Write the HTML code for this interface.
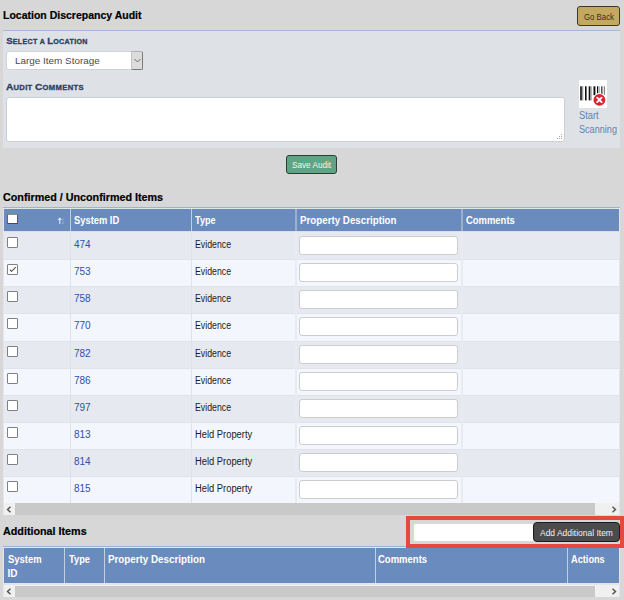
<!DOCTYPE html>
<html><head><meta charset="utf-8">
<style>
*{box-sizing:border-box;margin:0;padding:0}
html,body{width:624px;height:600px;overflow:hidden;background:#d7d7d7;font-family:"Liberation Sans",sans-serif;color:#111;position:relative}
div,span{position:absolute}
.t{line-height:1;white-space:nowrap}
.b{font-weight:bold;color:#000;-webkit-text-stroke:0.2px #000}
.lbl{font-weight:bold;color:#2b405e;font-variant:small-caps;font-size:10.5px;-webkit-text-stroke:0.3px #2b405e}
.lbl2{font-weight:bold;color:#2b405e;-webkit-text-stroke:0.3px #2b405e;transform-origin:0 0;font-size:10px}
.lbl2 span{position:static}
.lbl2 .c{font-size:9.6px}
.lbl2 .sc{font-size:7.1px;letter-spacing:0.35px}
.hdr{font-weight:bold;color:#fff;font-size:10px;transform-origin:0 0}
.row{left:4px;width:615px;height:27.05px}
.o{background:#e6e9f0}
.e{background:#f3f7fd}
.cb{left:3.3px;top:4.5px;width:11px;height:11.5px;border:1px solid #808080;background:#fff;border-radius:1px}
.lnk{left:70px;top:7.5px;font-size:10px;color:#2f50a8}
.typ{left:191px;top:7.6px;font-size:10px;color:#1a1a1a;transform-origin:0 0}
.ev{transform:scaleX(0.875)}
.hp{transform:scaleX(0.935)}
.inp{left:295px;top:4px;width:159px;height:19px;background:#fff;border:1px solid #cdcdcd;border-radius:3px}
.vl{top:0;width:1px;height:100%;background:#dfe3e9}
.v2{width:2px;background:#e8ebf0}
.hvl{width:1px;background:#c2cfe3}
.sbb{background:#f0f0f0;height:12px}
.thumb{background:#c9c9c9;height:12px}
</style></head><body>

<div class="t b" style="left:3px;top:10.1px;font-size:10.5px">Location Discrepancy Audit</div>
<div style="left:577px;top:6px;width:43px;height:20px;background:#c3a95d;border:1px solid #3b392c;border-radius:3px"></div>
<div class="t" style="left:584px;top:12.8px;font-size:9px;color:#352f1e;transform:scaleX(0.87);transform-origin:0 0">Go Back</div>

<!-- panel -->
<div style="left:3px;top:30px;width:617px;height:118px;background:#dee1e5;border-top:1px solid #a5b6da"></div>
<div class="t lbl2" style="left:6.3px;top:36.3px;transform:scaleX(1.0)"><span class="c">S</span><span class="sc">ELECT A </span><span class="c">L</span><span class="sc">OCATION</span></div>
<div style="left:6px;top:51px;width:137px;height:19px;background:#fff;border:1px solid #cfd3d7;border-radius:3px"></div>
<div class="t" style="left:15.3px;top:56.6px;font-size:9.25px;color:#4a4a4a;transform:scaleX(1.07);transform-origin:0 0">Large Item Storage</div>
<div style="left:131px;top:51px;width:12px;height:19px;background:#dcdcdc;border:1px solid #c4c4c4;border-top-color:#b0b0b0;border-right-color:#7a7a7a;border-bottom-color:#7a7a7a;border-radius:0 2px 2px 0"></div>
<svg style="position:absolute;left:134px;top:58px" width="7" height="5" viewBox="0 0 7 5"><path d="M0.5 1 L3.5 4 L6.5 1" fill="none" stroke="#6a6a6a" stroke-width="1"/></svg>
<div class="t lbl2" style="left:6.3px;top:82.3px;transform:scaleX(1.07)"><span class="c">A</span><span class="sc">UDIT </span><span class="c">C</span><span class="sc">OMMENTS</span></div>
<div style="left:6px;top:97px;width:559px;height:45px;background:#fff;border:1px solid #cbcfd3;border-radius:3px"></div>
<svg style="position:absolute;left:556.5px;top:133.5px" width="6" height="6" viewBox="0 0 6 6"><g fill="#a8a8a8"><rect x="4" y="0" width="1" height="1"/><rect x="2" y="2" width="1" height="1"/><rect x="4" y="2" width="1" height="1"/><rect x="0" y="4" width="1" height="1"/><rect x="2" y="4" width="1" height="1"/><rect x="4" y="4" width="1" height="1"/></g></svg>

<!-- barcode -->
<div style="left:579px;top:80px;width:28px;height:28px;background:#fff"></div>
<svg style="position:absolute;left:579px;top:80px" width="28" height="28" viewBox="0 0 28 28">
<g fill="#111">
<rect x="1.2" y="6.3" width="1.6" height="14.1"/>
<rect x="3.3" y="6.3" width="0.9" height="14.1" fill="#777"/>
<rect x="6" y="6.3" width="1.6" height="14.1"/>
<rect x="9.7" y="6.3" width="1.6" height="14.1"/>
<rect x="11.3" y="6.3" width="1.3" height="14.1" fill="#888"/>
<rect x="14.5" y="6.3" width="1.9" height="9"/>
<rect x="18" y="6.3" width="1.1" height="7"/>
<rect x="19.6" y="6.3" width="0.9" height="7" fill="#777"/>
<rect x="22.3" y="6.3" width="0.8" height="8"/>
<rect x="23.3" y="6.3" width="0.8" height="8" fill="#888"/>
<rect x="24.9" y="6.3" width="0.8" height="8.5" fill="#555"/>
</g>
<circle cx="20.4" cy="19.9" r="6.7" fill="#fff"/>
<circle cx="20.4" cy="19.9" r="5.9" fill="#dc2430"/>
<path d="M18.2 17.7 L22.6 22.1 M22.6 17.7 L18.2 22.1" stroke="#fff" stroke-width="1.9" stroke-linecap="round"/>
</svg>
<div class="t" style="left:578.6px;top:110.6px;font-size:10px;color:#6384b0;transform:scaleX(0.93);transform-origin:0 0">Start</div>
<div class="t" style="left:578.6px;top:124.6px;font-size:10px;color:#6384b0;transform:scaleX(0.91);transform-origin:0 0">Scanning</div>

<!-- save -->
<div style="left:286px;top:155px;width:51px;height:19px;background:#5fa585;border:1px solid #2b3e34;border-radius:3px"></div>
<div class="t" style="left:292.3px;top:160.8px;font-size:9.25px;color:#eef7f2;transform:scaleX(0.885);transform-origin:0 0">Save Audit</div>

<div class="t b" style="left:3px;top:191.9px;font-size:10.75px">Confirmed / Unconfirmed Items</div>

<!-- table 1 -->
<div style="left:3px;top:207px;width:617px;height:308px;background:#e2e5e9;border-top:1px solid #a0b0d8"></div>
<div style="left:4px;top:209px;width:615px;height:22px;background:#6a8bbd"></div>
<div class="hvl" style="left:70px;top:209px;height:22px"></div>
<div class="hvl" style="left:191px;top:209px;height:22px"></div>
<div class="hvl" style="left:295px;top:209px;height:22px;width:2px;background:#9cb0cf"></div>
<div class="hvl" style="left:461px;top:209px;height:22px;width:2px;background:#9cb0cf"></div>
<div style="left:7px;top:214px;width:11px;height:10px;background:#fff;border:1px solid #666;border-top-color:#8c8c8c;border-bottom-color:#4a4a4a;border-right-color:#555"></div>
<svg style="position:absolute;left:57px;top:217px" width="8" height="8" viewBox="0 0 8 8"><path d="M2.8 7 V1.2 M1.2 2.8 L2.8 1.2 L4.4 2.8" fill="none" stroke="#dfe8f6" stroke-width="1.1"/><path d="M6 1 V7 M4.9 5.9 L6 7 L7.1 5.9" fill="none" stroke="#8fa8cf" stroke-width="0.9"/></svg>
<div class="t hdr" style="left:74.4px;top:215.5px;transform:scaleX(0.935)">System ID</div>
<div class="t hdr" style="left:195.4px;top:215.5px;transform:scaleX(0.91)">Type</div>
<div class="t hdr" style="left:299.6px;top:215.5px;transform:scaleX(0.976)">Property Description</div>
<div class="t hdr" style="left:466px;top:215.5px;transform:scaleX(0.944)">Comments</div>
<div style="left:4px;top:231px;width:615px;height:1px;background:#dde1e6"></div>

<div style="left:0;top:232px;width:624px;height:271px">
<div class="row o" style="top:0px;height:27px"><div class="cb"></div><div class="vl" style="left:66px"></div><div class="vl" style="left:187px"></div><div class="vl v2" style="left:291px"></div><div class="vl v2" style="left:457px"></div><div class="t lnk">474</div><div class="t typ ev">Evidence</div><div class="inp"></div></div>
<div class="row e" style="top:27px;height:27px;box-shadow:inset 0 1px 0 #e0e3e9"><div class="cb"></div><svg style="position:absolute;left:5px;top:6px" width="8" height="7" viewBox="0 0 8 7"><path d="M0.9 4.7 L2.5 6.4 L6.75 2.2" fill="none" stroke="#555" stroke-width="1.1"/></svg><div class="vl" style="left:66px"></div><div class="vl" style="left:187px"></div><div class="vl v2" style="left:291px"></div><div class="vl v2" style="left:457px"></div><div class="t lnk">753</div><div class="t typ ev">Evidence</div><div class="inp"></div></div>
<div class="row o" style="top:54px;height:27px;box-shadow:inset 0 1px 0 #e0e3e9"><div class="cb"></div><div class="vl" style="left:66px"></div><div class="vl" style="left:187px"></div><div class="vl v2" style="left:291px"></div><div class="vl v2" style="left:457px"></div><div class="t lnk">758</div><div class="t typ ev">Evidence</div><div class="inp"></div></div>
<div class="row e" style="top:81px;height:28px;box-shadow:inset 0 1px 0 #e0e3e9"><div class="cb"></div><div class="vl" style="left:66px"></div><div class="vl" style="left:187px"></div><div class="vl v2" style="left:291px"></div><div class="vl v2" style="left:457px"></div><div class="t lnk">770</div><div class="t typ ev">Evidence</div><div class="inp"></div></div>
<div class="row o" style="top:109px;height:27px;box-shadow:inset 0 1px 0 #e0e3e9"><div class="cb"></div><div class="vl" style="left:66px"></div><div class="vl" style="left:187px"></div><div class="vl v2" style="left:291px"></div><div class="vl v2" style="left:457px"></div><div class="t lnk">782</div><div class="t typ ev">Evidence</div><div class="inp"></div></div>
<div class="row e" style="top:136px;height:27px;box-shadow:inset 0 1px 0 #e0e3e9"><div class="cb"></div><div class="vl" style="left:66px"></div><div class="vl" style="left:187px"></div><div class="vl v2" style="left:291px"></div><div class="vl v2" style="left:457px"></div><div class="t lnk">786</div><div class="t typ ev">Evidence</div><div class="inp"></div></div>
<div class="row o" style="top:163px;height:27px;box-shadow:inset 0 1px 0 #e0e3e9"><div class="cb"></div><div class="vl" style="left:66px"></div><div class="vl" style="left:187px"></div><div class="vl v2" style="left:291px"></div><div class="vl v2" style="left:457px"></div><div class="t lnk">797</div><div class="t typ ev">Evidence</div><div class="inp"></div></div>
<div class="row e" style="top:190px;height:27px;box-shadow:inset 0 1px 0 #e0e3e9"><div class="cb"></div><div class="vl" style="left:66px"></div><div class="vl" style="left:187px"></div><div class="vl v2" style="left:291px"></div><div class="vl v2" style="left:457px"></div><div class="t lnk">813</div><div class="t typ hp">Held Property</div><div class="inp"></div></div>
<div class="row o" style="top:217px;height:27px;box-shadow:inset 0 1px 0 #e0e3e9"><div class="cb"></div><div class="vl" style="left:66px"></div><div class="vl" style="left:187px"></div><div class="vl v2" style="left:291px"></div><div class="vl v2" style="left:457px"></div><div class="t lnk">814</div><div class="t typ hp">Held Property</div><div class="inp"></div></div>
<div class="row e" style="top:244px;height:27px;box-shadow:inset 0 1px 0 #e0e3e9"><div class="cb"></div><div class="vl" style="left:66px"></div><div class="vl" style="left:187px"></div><div class="vl v2" style="left:291px"></div><div class="vl v2" style="left:457px"></div><div class="t lnk">815</div><div class="t typ hp">Held Property</div><div class="inp"></div></div>
</div>

<!-- scrollbar 1 -->
<div class="sbb" style="left:4px;top:503px;width:615px"></div>
<div class="thumb" style="left:15px;top:503px;width:580px"></div>
<svg style="position:absolute;left:6px;top:506px" width="6" height="7" viewBox="0 0 6 7"><path d="M4.5 0.8 L1.5 3.5 L4.5 6.2" fill="none" stroke="#505050" stroke-width="1.4"/></svg>
<svg style="position:absolute;left:611px;top:506px" width="6" height="7" viewBox="0 0 6 7"><path d="M1.5 0.8 L4.5 3.5 L1.5 6.2" fill="none" stroke="#505050" stroke-width="1.4"/></svg>

<div class="t b" style="left:3px;top:525.9px;font-size:10.75px">Additional Items</div>

<!-- table 2 -->
<div style="left:3px;top:546px;width:617px;height:51px;background:#e2e5e9;border-top:1px solid #a0b0d8"></div>
<div style="left:4px;top:548px;width:615px;height:35px;background:#6a8bbd"></div>
<div class="hvl" style="left:64px;top:548px;height:35px"></div>
<div class="hvl" style="left:104px;top:548px;height:35px"></div>
<div class="hvl" style="left:375px;top:548px;height:35px"></div>
<div class="hvl" style="left:567px;top:548px;height:35px"></div>
<div class="t hdr" style="left:7.5px;top:554.5px;transform:scaleX(0.945)">System</div>
<div class="t hdr" style="left:7.5px;top:568.5px">ID</div>
<div class="t hdr" style="left:68.6px;top:554.5px;transform:scaleX(0.93)">Type</div>
<div class="t hdr" style="left:108.3px;top:554.5px;transform:scaleX(0.98)">Property Description</div>
<div class="t hdr" style="left:378.4px;top:554.5px;transform:scaleX(0.95)">Comments</div>
<div class="t hdr" style="left:571px;top:554.5px;transform:scaleX(0.92)">Actions</div>
<div class="sbb" style="left:4px;top:585px;width:615px"></div>
<div class="thumb" style="left:15px;top:586px;width:580px;height:11px"></div>
<svg style="position:absolute;left:6px;top:588px" width="6" height="7" viewBox="0 0 6 7"><path d="M4.5 0.8 L1.5 3.5 L4.5 6.2" fill="none" stroke="#505050" stroke-width="1.4"/></svg>
<svg style="position:absolute;left:611px;top:588px" width="6" height="7" viewBox="0 0 6 7"><path d="M1.5 0.8 L4.5 3.5 L1.5 6.2" fill="none" stroke="#505050" stroke-width="1.4"/></svg>

<!-- add additional -->
<div style="left:406px;top:516px;width:218px;height:32px;border:4px solid #e8473f;background:#d7d7d7"></div>
<div style="left:413px;top:522.6px;width:121px;height:19px;background:#fff;border:1px solid #dadada;border-radius:3px 0 0 3px"></div>
<div style="left:533px;top:522px;width:87px;height:20px;background:#4b4b4d;border:1px solid #1c1c1c;border-radius:4px"></div>
<div class="t" style="left:539.5px;top:528.8px;font-size:9px;color:#f2f2f2;transform:scaleX(0.94);transform-origin:0 0">Add Additional Item</div>

</body></html>
